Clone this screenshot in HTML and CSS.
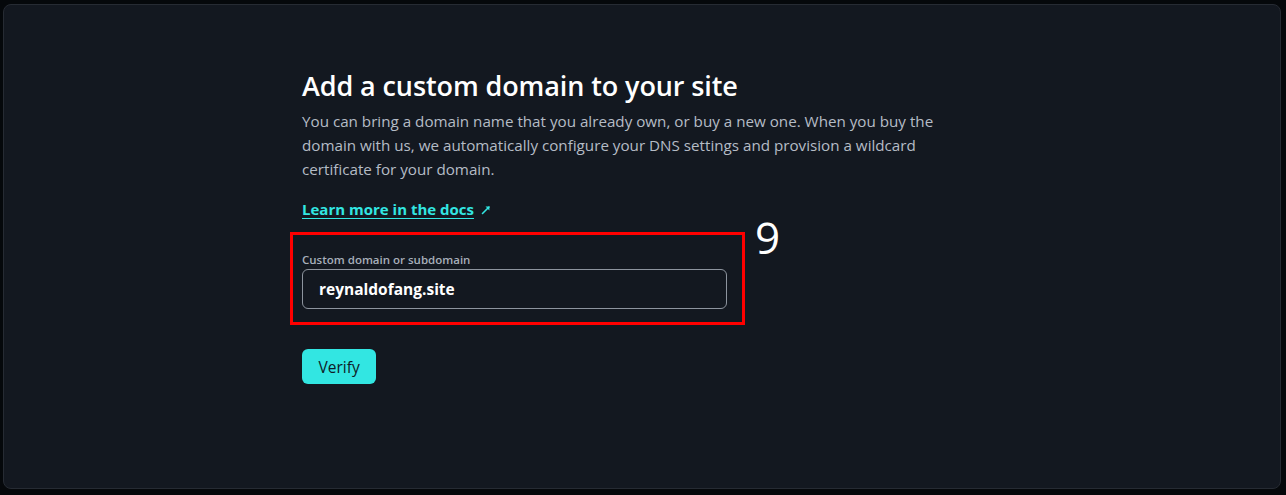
FILE: index.html
```html
<!DOCTYPE html>
<html lang="en">
<head>
<meta charset="utf-8">
<title>Add a custom domain</title>
<link rel="stylesheet" href="styles.css">
</head>
<body>
<main class="card">
  <section class="content">
    <h1 class="title">Add a custom domain to your site</h1>
    <p class="lead">You can bring a domain name that you already own, or buy a new one. When you buy the domain with us, we automatically configure your DNS settings and provision a wildcard certificate for your domain.</p>
    <p class="docs"><a class="docs-link" href="#">Learn more in the docs</a><svg class="ext" width="12" height="12" viewBox="0 0 12 12" aria-hidden="true"><path d="M2.5 9.5 L9 3" stroke="#32e6e2" stroke-width="1.6" fill="none" stroke-linecap="round"/><path d="M5.5 2.6 H9.4 V6.5 Z" fill="#32e6e2"/></svg></p>
    <div class="field-wrap">
      <div class="field">
        <label class="label" for="domain">Custom domain or subdomain</label>
        <div class="input" id="domain">reynaldofang.site</div>
      </div>
      <span class="marker">9</span>
    </div>
    <button class="verify" type="button">Verify</button>
  </section>
</main>
</body>
</html>
```
FILE: styles.css
```css
html, body {
  margin: 0;
  padding: 0;
  background: #05080b;
}
body {
  font-family: "Open Sans", "Noto Sans", Arial, sans-serif;
  color: #fff;
}
.card {
  box-sizing: border-box;
  margin: 4px 5px 0 3px;
  height: 485px;
  background: #131820;
  border: 1px solid #262b33;
  border-radius: 8px;
  padding: 64px 0 0 298px;
}
.content {
  width: 650px;
}
.title {
  margin: 0;
  font-size: 27px;
  line-height: 34px;
  font-weight: 600;
  color: #fff;
  letter-spacing: -0.1px;
}
.lead {
  margin: 6px 0 0;
  font-size: 15.2px;
  line-height: 24px;
  color: #b5bcc6;
}
.docs {
  margin: 16px 0 0;
  font-size: 15px;
  line-height: 24px;
  display: flex;
  align-items: center;
  gap: 6px;
}
.docs-link {
  color: #32e6e2;
  font-weight: 700;
  text-decoration: underline;
  text-underline-offset: 3px;
}
.ext { margin-top: 2px; }
.field-wrap {
  position: relative;
  margin: 11px 0 0 -12px;
  width: 455px;
  box-sizing: border-box;
  border: 3px solid #ff0000;
  padding: 17px 15px 13px 9px;
}
.label {
  display: block;
  font-size: 11.5px;
  font-weight: 600;
  color: #a7afba;
  line-height: 16px;
  margin-bottom: 1px;
}
.input {
  box-sizing: border-box;
  height: 40px;
  border: 1px solid #8d949e;
  border-radius: 6px;
  padding: 0 16px;
  display: flex;
  align-items: center;
  font-size: 15.5px;
  font-weight: 700;
  color: #fff;
}
.marker {
  position: absolute;
  left: 462px;
  top: -27px;
  font-size: 44px;
  line-height: 58px;
  color: #fff;
}
.verify {
  margin-top: 24px;
  height: 35px;
  padding: 0 16.5px;
  border: 0;
  border-radius: 6px;
  background: #32e6e2;
  color: #0f1b26;
  font-family: inherit;
  font-size: 15.5px;
}
```
